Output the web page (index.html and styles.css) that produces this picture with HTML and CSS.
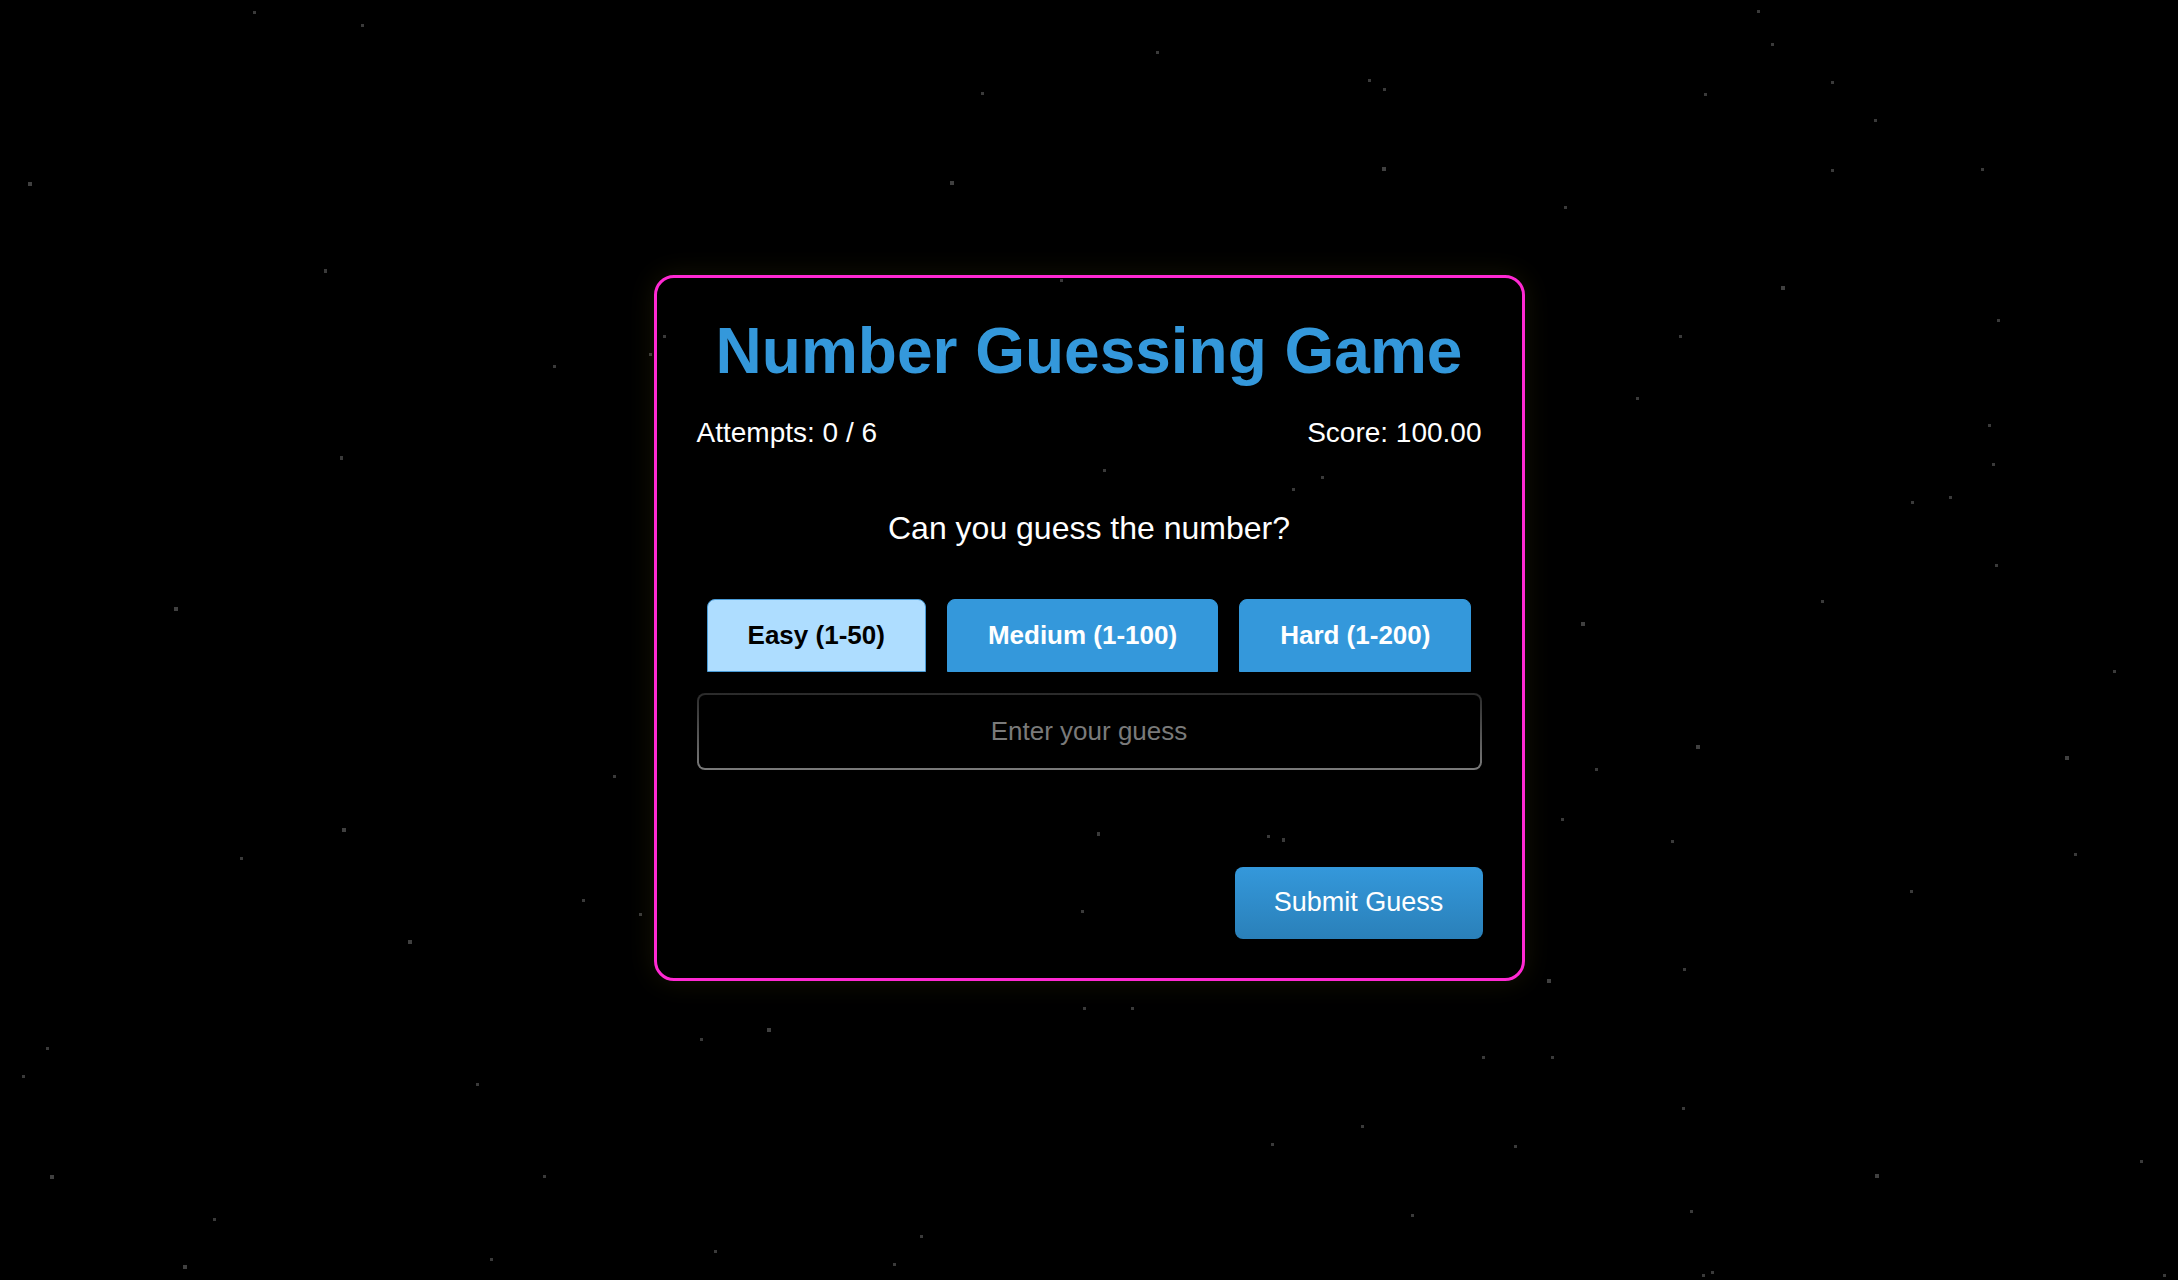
FILE: index.html
```html
<!DOCTYPE html>
<html lang="en">
<head>
<meta charset="utf-8">
<title>Number Guessing Game</title>
<link rel="stylesheet" href="styles.css">
</head>
<body>
<div class="stars">
<i class="star" style="left:253px;top:11px"></i>
<i class="star" style="left:361px;top:24px"></i>
<i class="star big" style="left:28px;top:182px"></i>
<i class="star tall" style="left:324px;top:269px"></i>
<i class="star" style="left:553px;top:365px"></i>
<i class="star tall" style="left:340px;top:456px"></i>
<i class="star big" style="left:174px;top:607px"></i>
<i class="star" style="left:613px;top:775px"></i>
<i class="star big" style="left:342px;top:828px"></i>
<i class="star" style="left:240px;top:857px"></i>
<i class="star" style="left:582px;top:899px"></i>
<i class="star big" style="left:408px;top:940px"></i>
<i class="star" style="left:639px;top:913px"></i>
<i class="star" style="left:46px;top:1047px"></i>
<i class="star" style="left:22px;top:1075px"></i>
<i class="star" style="left:476px;top:1083px"></i>
<i class="star big" style="left:767px;top:1028px"></i>
<i class="star" style="left:700px;top:1038px"></i>
<i class="star big" style="left:50px;top:1175px"></i>
<i class="star" style="left:213px;top:1218px"></i>
<i class="star big" style="left:183px;top:1265px"></i>
<i class="star" style="left:490px;top:1258px"></i>
<i class="star" style="left:543px;top:1175px"></i>
<i class="star" style="left:714px;top:1250px"></i>
<i class="star" style="left:920px;top:1235px"></i>
<i class="star" style="left:893px;top:1263px"></i>
<i class="star" style="left:981px;top:92px"></i>
<i class="star" style="left:1156px;top:51px"></i>
<i class="star big" style="left:950px;top:181px"></i>
<i class="star" style="left:1368px;top:79px"></i>
<i class="star" style="left:1383px;top:88px"></i>
<i class="star big" style="left:1382px;top:167px"></i>
<i class="star" style="left:1564px;top:206px"></i>
<i class="star" style="left:1757px;top:10px"></i>
<i class="star" style="left:1771px;top:43px"></i>
<i class="star" style="left:1831px;top:81px"></i>
<i class="star" style="left:1704px;top:93px"></i>
<i class="star" style="left:1874px;top:119px"></i>
<i class="star" style="left:1831px;top:169px"></i>
<i class="star" style="left:1981px;top:168px"></i>
<i class="star big" style="left:1781px;top:286px"></i>
<i class="star" style="left:1997px;top:319px"></i>
<i class="star" style="left:1679px;top:335px"></i>
<i class="star" style="left:1636px;top:397px"></i>
<i class="star" style="left:1988px;top:424px"></i>
<i class="star" style="left:1992px;top:463px"></i>
<i class="star" style="left:1911px;top:501px"></i>
<i class="star" style="left:1949px;top:496px"></i>
<i class="star" style="left:1995px;top:564px"></i>
<i class="star" style="left:1821px;top:600px"></i>
<i class="star big" style="left:1581px;top:622px"></i>
<i class="star big" style="left:1696px;top:745px"></i>
<i class="star" style="left:1595px;top:768px"></i>
<i class="star big" style="left:2065px;top:756px"></i>
<i class="star" style="left:2113px;top:670px"></i>
<i class="star" style="left:1561px;top:818px"></i>
<i class="star" style="left:1671px;top:840px"></i>
<i class="star" style="left:2074px;top:853px"></i>
<i class="star" style="left:1910px;top:890px"></i>
<i class="star" style="left:1683px;top:968px"></i>
<i class="star big" style="left:1547px;top:979px"></i>
<i class="star" style="left:1482px;top:1056px"></i>
<i class="star" style="left:1551px;top:1056px"></i>
<i class="star" style="left:1682px;top:1107px"></i>
<i class="star" style="left:1514px;top:1145px"></i>
<i class="star big" style="left:1875px;top:1174px"></i>
<i class="star" style="left:1411px;top:1214px"></i>
<i class="star" style="left:1690px;top:1210px"></i>
<i class="star" style="left:2140px;top:1160px"></i>
<i class="star" style="left:1702px;top:1274px"></i>
<i class="star" style="left:1711px;top:1271px"></i>
<i class="star" style="left:1361px;top:1125px"></i>
<i class="star" style="left:1271px;top:1143px"></i>
<i class="star" style="left:1083px;top:1007px"></i>
<i class="star" style="left:1131px;top:1007px"></i>
<i class="star" style="left:1081px;top:910px"></i>
<i class="star tall" style="left:1097px;top:832px"></i>
<i class="star" style="left:1267px;top:835px"></i>
<i class="star tall" style="left:1282px;top:838px"></i>
<i class="star" style="left:1028px;top:699px"></i>
<i class="star" style="left:1103px;top:469px"></i>
<i class="star" style="left:1292px;top:488px"></i>
<i class="star" style="left:1321px;top:476px"></i>
<i class="star" style="left:1060px;top:279px"></i>
<i class="star" style="left:649px;top:353px"></i>
<i class="star" style="left:663px;top:335px"></i>
<i class="star" style="left:2163px;top:1274px"></i>
</div>

<main class="page">
  <section class="card">
    <h1 class="title">Number Guessing Game</h1>
    <div class="stats">
      <span class="stat">Attempts: 0 / 6</span>
      <span class="stat">Score: 100.00</span>
    </div>
    <p class="prompt">Can you guess the number?</p>
    <div class="levels">
      <button class="level level-active" type="button">Easy (1-50)</button>
      <button class="level" type="button">Medium (1-100)</button>
      <button class="level" type="button">Hard (1-200)</button>
    </div>
    <input class="guess" type="number" placeholder="Enter your guess">
    <div class="message"></div>
    <div class="actions">
      <button class="submit" type="button">Submit Guess</button>
    </div>
  </section>
</main>
</body>
</html>
```

FILE: styles.css
```css
html, body {
  margin: 0;
  padding: 0;
  background: #000;
  height: 100%;
}

body {
  font-family: "Liberation Sans", Arial, sans-serif;
  color: #fff;
  overflow: hidden;
  position: relative;
}

.stars {
  position: absolute;
  inset: 0;
  z-index: 0;
  pointer-events: none;
}

.star {
  position: absolute;
  display: block;
  width: 3px;
  height: 3px;
  background: #3a3a3a;
}

.star.big {
  width: 4px;
  height: 4px;
  background: #404040;
}

.star.tall {
  width: 3px;
  height: 4px;
}

.page {
  position: relative;
  z-index: 1;
  height: 1280px;
  box-sizing: border-box;
  padding-bottom: 24px;
  display: flex;
  align-items: center;
  justify-content: center;
}

.card {
  width: 785px;
  padding: 37px 40px 39px;
  border: 3px solid #ff29d3;
  border-radius: 20px;
  background: transparent;
  box-shadow: 0 0 28px rgba(255, 220, 40, 0.09);
  display: flex;
  flex-direction: column;
}

.title {
  margin: 0 0 28px;
  font-size: 64px;
  font-weight: 700;
  color: #3498db;
  text-align: center;
  line-height: 1.15;
}

.stats {
  display: flex;
  justify-content: space-between;
  font-size: 28px;
  line-height: 32px;
}

.prompt {
  margin: 61px 0 52px;
  font-size: 32px;
  line-height: 37px;
  text-align: center;
}

.levels {
  display: flex;
  justify-content: center;
  gap: 21px;
}

.level {
  height: 73px;
  padding: 0 40px;
  border: 1px solid #3498db;
  border-radius: 8px 8px 0 0;
  background: #3498db;
  color: #fff;
  font-family: "Liberation Sans", Arial, sans-serif;
  font-size: 26px;
  font-weight: 700;
  cursor: pointer;
}

.level-active {
  background: #aeddff;
  border-color: #4a9bd6;
  color: #000;
}

.guess {
  margin-top: 21px;
  height: 77px;
  box-sizing: border-box;
  width: 100%;
  border: 2px solid transparent;
  border-radius: 8px;
  background:
    linear-gradient(#000, #000) padding-box,
    linear-gradient(#2a2a2a, #7a7a7a) border-box;
  color: #fff;
  font-family: "Liberation Sans", Arial, sans-serif;
  font-size: 26px;
  text-align: center;
  outline: none;
  -moz-appearance: textfield;
}

.guess::-webkit-outer-spin-button,
.guess::-webkit-inner-spin-button {
  -webkit-appearance: none;
  margin: 0;
}

.guess::placeholder {
  color: #7a7a7a;
}

.message {
  height: 97px;
}

.actions {
  display: flex;
  justify-content: flex-end;
}

.submit {
  width: 248px;
  height: 72px;
  margin-right: -1px;
  border: none;
  border-radius: 8px;
  background: linear-gradient(#3498db, #2a80b9);
  color: #fff;
  font-family: "Liberation Sans", Arial, sans-serif;
  font-size: 27px;
  cursor: pointer;
}
```
